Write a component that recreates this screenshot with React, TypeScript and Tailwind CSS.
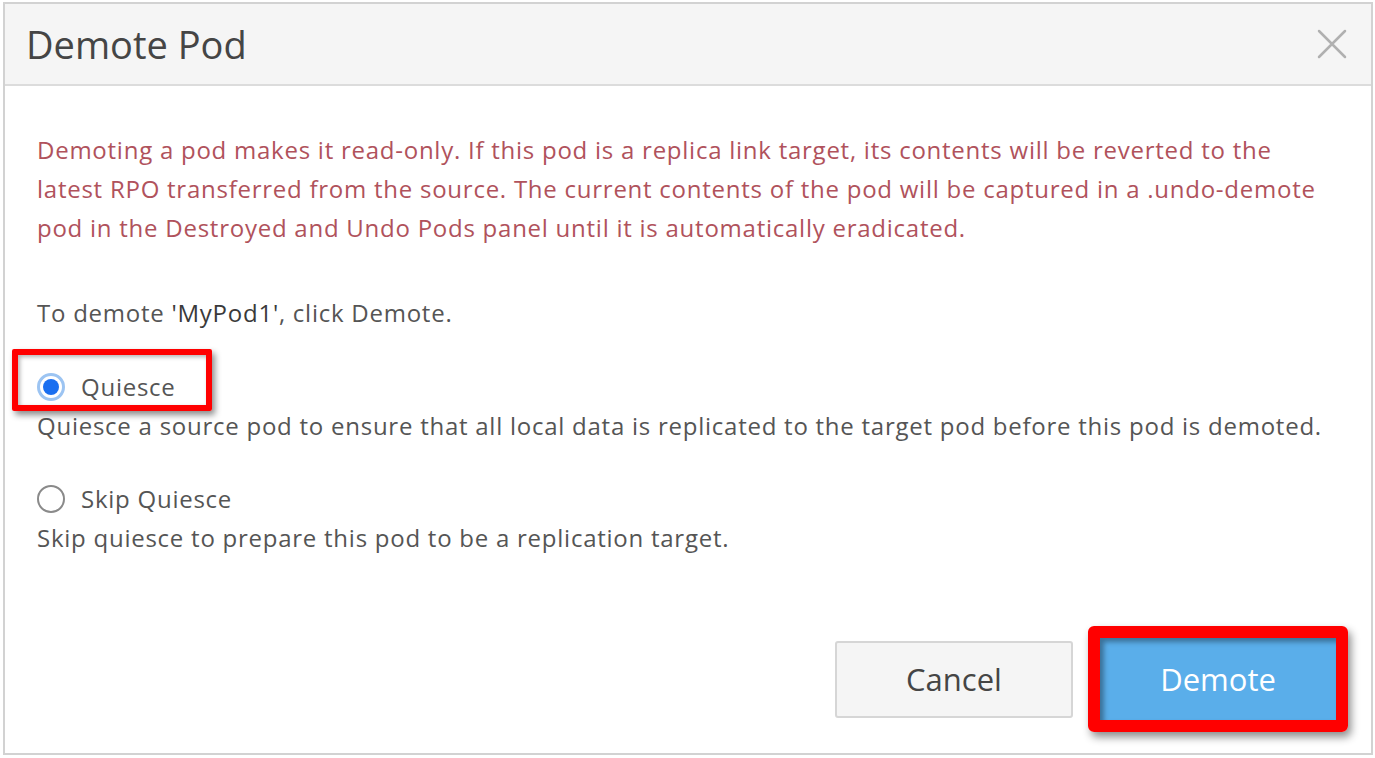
import React from 'react';

const Radio = ({ checked }: { checked: boolean }) =>
    checked ? (
        <span className="w-[28px] h-[28px] rounded-full border-[3px] border-[#9cc4f2] bg-white flex items-center justify-center shrink-0">
            <span className="w-[16px] h-[16px] rounded-full bg-[#1a6ff0]" />
        </span>
    ) : (
        <span className="w-[28px] h-[28px] rounded-full border-[2px] border-[#8a8a8a] bg-white shrink-0" />
    );

const App = () => {
    return (
        <div className="w-[1375px] h-[758px] bg-white pl-[3px] pt-[2px] font-['Open_Sans',sans-serif]">
            <div className="w-[1370px] h-[753px] border-2 border-[#d2d2d2] flex flex-col">
                <header className="h-[82px] bg-[#f5f5f5] border-b-2 border-[#dcdcdc] flex items-center justify-between pl-[21px] pr-[24px]">
                    <h1 className="text-[38px] text-[#454545] leading-none">Demote Pod</h1>
                    <svg width="30" height="30" viewBox="0 0 30 30" className="text-[#b0b0b0]">
                        <path d="M2 2L28 28M28 2L2 28" stroke="currentColor" strokeWidth="2.5" strokeLinecap="round" />
                    </svg>
                </header>

                <section className="flex-1 flex flex-col pl-[32px] pr-[23px] pt-[44px] text-[24px] leading-[39px] tracking-[0.75px]">
                    <p className="text-[#b0525c] whitespace-nowrap">
                        Demoting a pod makes it read-only. If this pod is a replica link target, its contents will be reverted to the
                        <br />
                        latest RPO transferred from the source. The current contents of the pod will be captured in a .undo-demote
                        <br />
                        pod in the Destroyed and Undo Pods panel until it is automatically eradicated.
                    </p>

                    <p className="text-[#555] mt-[46px]">
                        To demote <span className="text-[#3a3a3a]">'MyPod1'</span>, click Demote.
                    </p>

                    <div className="relative mt-[35px] flex items-center gap-[16px] h-[39px]">
                        <Radio checked />
                        <span className="text-[#555]">Quiesce</span>
                        <div className="absolute left-[-25px] top-[-18px] w-[200px] h-[62px] border-[6px] border-[#ff0000] rounded-[2px] shadow-[3px_4px_6px_rgba(0,0,0,0.45),inset_2px_2px_4px_rgba(0,0,0,0.3)]" />
                    </div>
                    <p className="text-[#555] whitespace-nowrap">
                        Quiesce a source pod to ensure that all local data is replicated to the target pod before this pod is demoted.
                    </p>

                    <div className="mt-[34px] flex items-center gap-[16px] h-[39px]">
                        <Radio checked={false} />
                        <span className="text-[#555]">Skip Quiesce</span>
                    </div>
                    <p className="text-[#555]">Skip quiesce to prepare this pod to be a replication target.</p>

                    <div className="mt-auto mb-[21px] flex justify-end items-center gap-[15px] tracking-normal">
                        <button className="w-[238px] h-[77px] bg-[#f5f5f5] border-2 border-[#d6d6d6] rounded-[3px] text-[31px] text-[#454545]">
                            Cancel
                        </button>
                        <div className="border-[12px] border-[#ff0000] rounded-[6px] shadow-[3px_5px_8px_rgba(0,0,0,0.45)]">
                            <button className="w-[236px] h-[82px] bg-[#5aaeea] text-[31px] text-white block shadow-[inset_4px_4px_5px_rgba(0,0,0,0.35)]">
                                Demote
                            </button>
                        </div>
                    </div>
                </section>
            </div>
        </div>
    );
};

export default App;
